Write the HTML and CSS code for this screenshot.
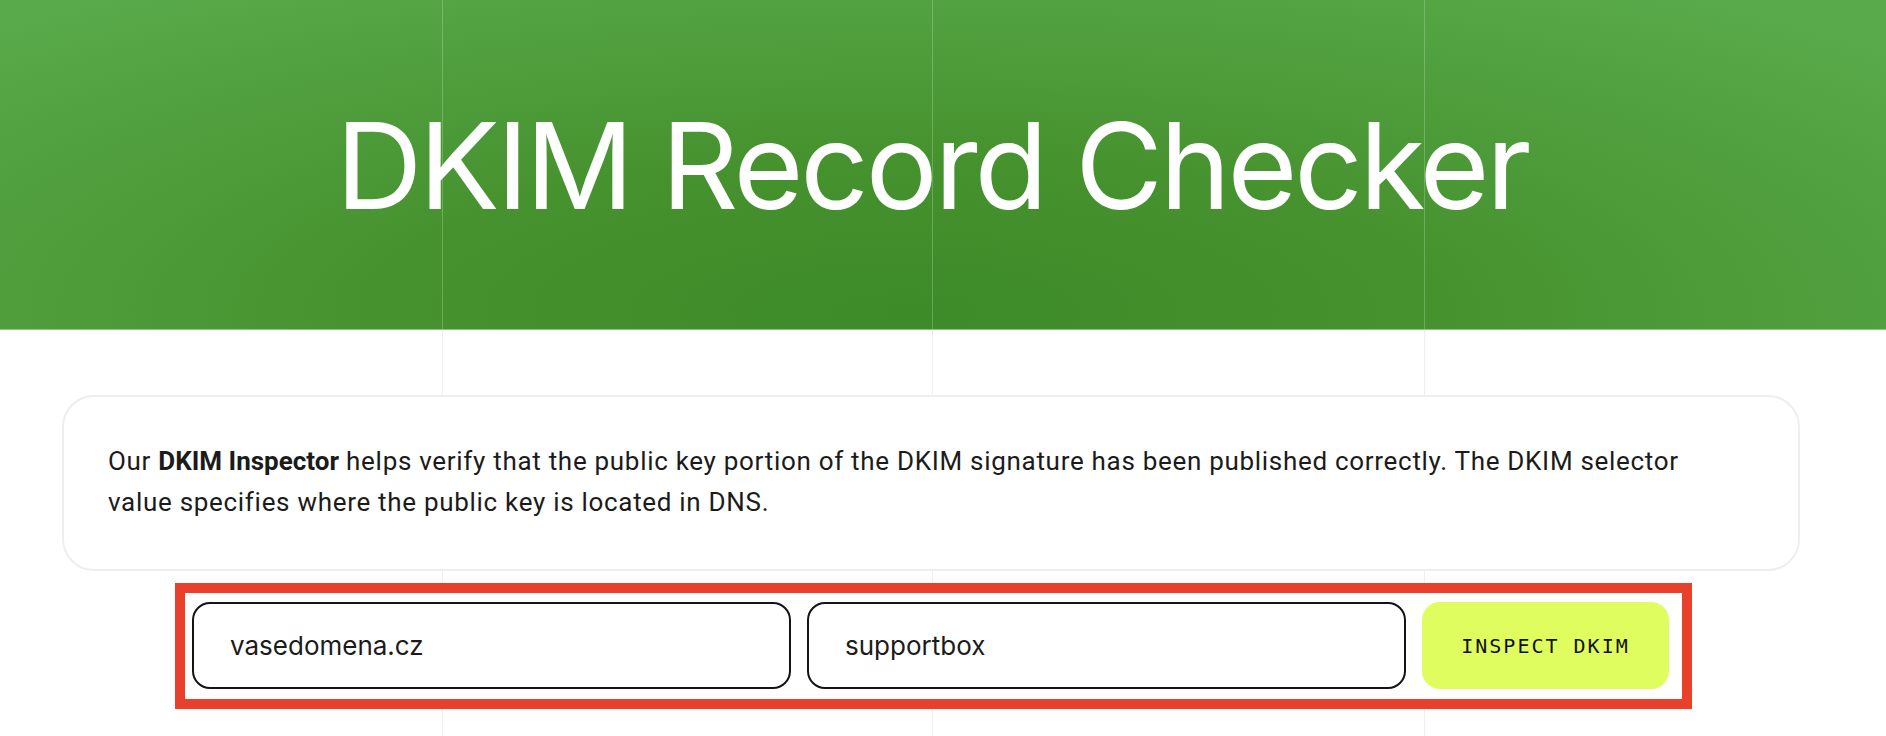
FILE: index.html
```html
<!DOCTYPE html>
<html lang="en">
<head>
<meta charset="utf-8">
<title>DKIM Record Checker</title>
<link rel="stylesheet" href="styles.css">
</head>
<body>
<header class="hero">
  <h1 class="hero-title">DKIM Record Checker</h1>
</header>
<main class="content">
  <section class="card">
    <p class="card-text">Our <strong>DKIM Inspector</strong> helps verify that the public key portion of the DKIM signature has been published correctly. The DKIM selector value specifies where the public key is located in DNS.</p>
  </section>
  <div class="highlight">
    <form class="form">
      <input class="field" type="text" value="vasedomena.cz">
      <input class="field" type="text" value="supportbox">
      <button class="btn" type="button">INSPECT DKIM</button>
    </form>
  </div>
</main>
</body>
</html>
```
FILE: styles.css
```css
html, body {
  margin: 0;
  padding: 0;
}
body {
  min-height: 736px;
  background:
    linear-gradient(#efefef, #efefef) 442px 0 / 1px 100% no-repeat,
    linear-gradient(#efefef, #efefef) 932px 0 / 1px 100% no-repeat,
    linear-gradient(#efefef, #efefef) 1424px 0 / 1px 100% no-repeat,
    #ffffff;
  font-family: Roboto, "Liberation Sans", sans-serif;
  color: #1b1b1b;
}
.hero {
  height: 330px;
  box-sizing: border-box;
  border-bottom: 1px solid rgba(255, 255, 255, 0.35);
  display: flex;
  align-items: center;
  justify-content: center;
  padding-right: 22px;
  background:
    linear-gradient(rgba(255,255,255,0.22), rgba(255,255,255,0.22)) 442px 0 / 1px 100% no-repeat,
    linear-gradient(rgba(255,255,255,0.22), rgba(255,255,255,0.22)) 932px 0 / 1px 100% no-repeat,
    linear-gradient(rgba(255,255,255,0.22), rgba(255,255,255,0.22)) 1424px 0 / 1px 100% no-repeat,
    radial-gradient(ellipse 70% 120% at 48% 95%, #3d8a28 0%, #46922f 40%, #59aa4a 100%);
}
.hero-title {
  margin: 0;
  font-family: Inter, "Liberation Sans", sans-serif;
  font-weight: 400;
  font-size: 120px;
  line-height: 1;
  letter-spacing: -3.2px;
  color: #ffffff;
  padding-top: 2px;
}
.content {
  width: 1738px;
  margin-left: 62px;
  padding-top: 65px;
}
.card {
  box-sizing: border-box;
  height: 176px;
  border: 2px solid #eeeeee;
  border-radius: 32px;
  background: #ffffff;
  padding: 44px 80px 44px 44px;
}
.card-text {
  margin: 0;
  font-size: 26px;
  line-height: 41px;
  letter-spacing: 0.7px;
}
.card-text strong {
  font-weight: 700;
  letter-spacing: 0;
}
.highlight {
  box-sizing: border-box;
  width: 1517px;
  margin: 12px 0 0 113px;
  border: 10px solid #e8402a;
  background: #ffffff;
  padding: 9px 13px 10px 7px;
}
.form {
  display: flex;
  gap: 16px;
  margin: 0;
}
.field {
  flex: 1;
  min-width: 0;
  height: 87px;
  box-sizing: border-box;
  border: 2px solid #141414;
  border-radius: 18px;
  padding: 0 0 0 36px;
  font-family: Inter, "Liberation Sans", sans-serif;
  font-size: 26px;
  color: #1b1b1b;
  background: #ffffff;
  outline: none;
}
.btn {
  width: 247px;
  flex: none;
  height: 87px;
  border: none;
  border-radius: 18px;
  background: #dffd5e;
  font-family: "DejaVu Sans Mono", "Liberation Mono", monospace;
  font-size: 20px;
  letter-spacing: 2px;
  color: #111111;
  padding: 0;
  cursor: pointer;
}
```
